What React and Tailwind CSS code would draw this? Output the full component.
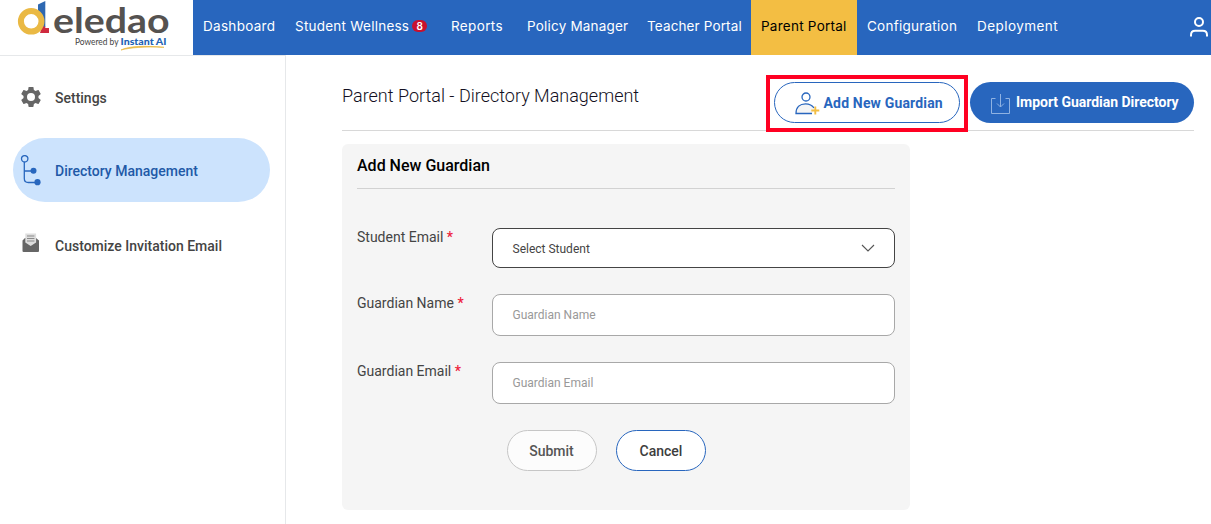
import React from "react";

const nav = [
  { label: "Dashboard", box: "w-[92px] tracking-[0.3px]" },
  { label: "Student Wellness", box: "w-[156px] tracking-[0.23px]", badge: "8" },
  { label: "Reports", box: "w-[76px] tracking-[0.37px]" },
  { label: "Policy Manager", box: "w-[120px] tracking-[0.2px]" },
  { label: "Teacher Portal", box: "w-[114px] tracking-[0.13px]" },
  { label: "Parent Portal", box: "w-[106px] bg-[#f3be43] text-black tracking-[0.25px]" },
  { label: "Configuration", box: "w-[110px] tracking-[0.25px]" },
  { label: "Deployment", box: "w-[101px] tracking-[0.45px]" },
];

function Logo() {
  return (
    <svg width="193" height="55" viewBox="0 0 193 55" className="shrink-0">
      <path d="M38 4.500 45.300 1v26H38z" fill="#2e68b1" />
      <path d="M42 26.500h3.300v1.500H49v5h-9z" fill="#cf2a3f" />
      <circle cx="31.200" cy="21.300" r="10.300" fill="#fff" stroke="#eab944" strokeWidth="6" />
      <text x="53" y="32.600" fontFamily="Lato, sans-serif" fontWeight="700" fontSize="34" fill="#555250" textLength="116.500" lengthAdjust="spacingAndGlyphs">eledao</text>
      <text x="75" y="44.500" fontFamily="Lato, sans-serif" fontSize="8.600" fill="#444" textLength="43.500" lengthAdjust="spacingAndGlyphs">Powered by</text>
      <text x="120.500" y="44.500" fontFamily="Lato, sans-serif" fontWeight="900" fontSize="9.800" fill="#2463b4" textLength="46" lengthAdjust="spacingAndGlyphs">Instant AI</text>
      <path d="M121 50C129 46 144 45.500 164 47.300 144 46.500 131 47.500 121 50z" fill="#eab944" stroke="#eab944" strokeWidth=".7" />
    </svg>
  );
}

function Gear() {
  return (
    <svg width="24" height="24" viewBox="0 0 24 24" fill="#666">
      <path d="M19.430 12.980c.04-.32.07-.64.07-.98s-.03-.66-.07-.98l2.110-1.650c.19-.15.24-.42.12-.64l-2-3.460c-.12-.22-.39-.3-.61-.22l-2.490 1c-.52-.4-1.080-.73-1.690-.98l-.38-2.650C14.460 2.180 14.250 2 14 2h-4c-.25 0-.46.18-.49.42l-.38 2.650c-.61.25-1.170.59-1.690.98l-2.490-1c-.23-.09-.49 0-.61.22l-2 3.460c-.13.22-.07.49.12.64l2.110 1.650c-.04.32-.07.65-.07.98s.03.66.07.98l-2.110 1.650c-.19.15-.24.42-.12.64l2 3.460c.12.22.39.3.61.22l2.490-1c.52.4 1.080.73 1.690.98l.38 2.650c.03.24.24.42.49.42h4c.25 0 .46-.18.49-.42l.38-2.650c.61-.25 1.170-.59 1.690-.98l2.490 1c.23.09.49 0 .61-.22l2-3.460c.12-.22.07-.49-.12-.64zM12 16a4 4 0 1 1 0-8 4 4 0 0 1 0 8z" />
    </svg>
  );
}

function Tree() {
  return (
    <svg width="22" height="32" viewBox="0 0 22 32" fill="none" stroke="#2867be" strokeWidth="1.300">
      <circle cx="4.700" cy="3.800" r="3.200" />
      <path d="M4.300 7v16.500q0 4 4 4H17M4.300 16H13" />
      <circle cx="13.500" cy="15.700" r="3" fill="#2867be" stroke="none" />
      <circle cx="17.500" cy="27.200" r="3.100" fill="#2867be" stroke="none" />
    </svg>
  );
}

function Mail() {
  return (
    <svg width="20" height="20" viewBox="0 0 20 20">
      <path d="M1.500 7.500 4 5h11l3 2.500V18q0 1-1 1H2.500q-1 0-1-1z" fill="#666" />
      <path d="M4.300.5h10.800V9.500L9.700 13 4.300 9.500z" fill="#dedede" />
      <path d="M6 3h7.400M6 5.500h7.400M6 8h7.400" stroke="#8a8a8a" strokeWidth="1" />
    </svg>
  );
}

const Required = () => <span className="text-[#ee1c3c] font-medium">*</span>;

export default function App() {
  return (
    <div className="flex h-[524px] w-[1211px] flex-col overflow-hidden bg-white font-['Roboto',sans-serif] text-[#444]">
      <header className="flex h-[55px] shrink-0">
        <Logo />
        <nav className="flex flex-1 bg-[#2866be] font-['Inter',sans-serif] text-[13.5px] font-normal text-white">
          {nav.map((n) => (
            <div key={n.label} className={`flex shrink-0 items-center whitespace-nowrap pb-[3px] pl-[10px] ${n.box}`}>
              <span>{n.label}</span>
              {n.badge && (
                <span className="ml-[3px] flex h-3 w-[15px] items-center justify-center rounded-full bg-[#c8102e] text-[10px] font-semibold tracking-normal">
                  {n.badge}
                </span>
              )}
            </div>
          ))}
          <svg className="ml-auto mt-4 shrink-0" width="22" height="22" viewBox="0 0 22 22" fill="none" stroke="#fff" strokeWidth="2">
            <circle cx="10" cy="6" r="4" />
            <path d="M2 20.500V19q0-4.200 4.200-4.200h7.600Q18 14.800 18 19v1.500" />
          </svg>
        </nav>
      </header>

      <div className="flex flex-1">
        <aside className="flex w-[286px] shrink-0 flex-col border-r border-t border-[#e6e8ea] pl-[13px] text-sm font-medium">
          <div className="mt-[10px] flex h-16 items-center">
            <span className="flex w-[42px] pb-[2px] pl-[6px]"><Gear /></span>
            <span>Settings</span>
          </div>
          <div className="mt-2 flex h-16 w-[257px] items-center rounded-[32px] bg-[#cce3fd] text-[#2159a7]">
            <span className="flex w-[42px] pl-[7px] pt-[2px]"><Tree /></span>
            <span className="pt-[2px]">Directory Management</span>
          </div>
          <div className="mt-[10px] flex h-16 items-center">
            <span className="flex w-[42px] pb-[2px] pl-2"><Mail /></span>
            <span className="pt-[4px]">Customize Invitation Email</span>
          </div>
        </aside>

        <main className="flex-1 pl-14 pr-[17px]">
          <div className="flex h-[76px] justify-between border-b border-[#d8d8d8]">
            <h1 className="pt-[28px] text-[18px] font-light leading-[26px] text-[#120f22]">Parent Portal - Directory Management</h1>
            <div className="flex pt-5">
              <div className="flex h-[57px] w-[202px] justify-center border-4 border-[#ff0022] pt-[3px]">
                <button className="flex h-[41px] w-[186px] items-center whitespace-nowrap rounded-full border border-[#2866be] bg-white pl-5 text-sm font-bold tracking-[0.17px] text-[#2866be]">
                  <svg className="mr-[3.5px] mt-[3px] shrink-0" width="25" height="24" viewBox="0 0 25 24" fill="none" stroke="#2866be" strokeWidth="1.300">
                    <circle cx="11" cy="5" r="4" />
                    <path d="M17 21.500H1C1 15 5 11.800 10.500 11.800c4.500 0 7 1.800 8.500 4.200" fill="#f5f5f5" />
                    <path d="M20.300 14.500v8M16.300 18.500h8" stroke="#f3be43" strokeWidth="1.900" />
                  </svg>
                  Add New Guardian
                </button>
              </div>
              <button className="ml-[2px] mt-[7px] flex h-[41px] w-[224px] items-center whitespace-nowrap rounded-full bg-[#2866be] pb-px pl-5 text-sm font-bold tracking-[-0.03px] text-white">
                <svg className="mr-[5px] mt-1 shrink-0" width="21" height="22" viewBox="0 0 21 22" fill="none" stroke="#8fb2e2">
                  <path d="M5.500 5.500h-4v15h18v-15h-4M10.500 1v13M7 10.500l3.500 3.500 3.500-3.500" />
                </svg>
                Import Guardian Directory
              </button>
            </div>
          </div>

          <section className="mt-[13px] h-[366px] w-[568px] rounded-md bg-[#f5f5f5] px-[15px]">
            <h2 className="h-[45px] border-b border-[#d2d2d2] pt-[10px] text-base font-medium leading-6 text-black">Add New Guardian</h2>
            <div className="mt-[39px] flex">
              <label className="w-[135px] text-sm leading-[18px]">Student Email <Required /></label>
              <div className="flex h-10 w-[403px] items-center justify-between rounded-lg border border-[#444] bg-white pl-[19.5px] pr-[19px] pt-px text-xs">
                Select Student
                <svg className="-mt-px" width="14" height="8" viewBox="0 0 14 8" fill="none" stroke="#555" strokeWidth="1.100"><path d="M1 1l6 6 6-6" /></svg>
              </div>
            </div>
            <div className="mt-[26px] flex">
              <label className="w-[135px] text-sm leading-[18px]">Guardian Name <Required /></label>
              <div className="flex h-[42px] w-[403px] items-center rounded-lg border border-[#a8a8a8] bg-white pl-[19.5px] text-xs text-[#999]">Guardian Name</div>
            </div>
            <div className="mt-[26px] flex">
              <label className="w-[135px] text-sm leading-[18px]">Guardian Email <Required /></label>
              <div className="flex h-[42px] w-[403px] items-center rounded-lg border border-[#a8a8a8] bg-white pl-[19.5px] text-xs text-[#999]">Guardian Email</div>
            </div>
            <div className="mt-[26px] flex gap-[19px] pl-[150px] text-sm font-medium">
              <button className="h-[41px] w-[90px] rounded-full border border-[#c6c6c6] bg-[#fcfcfc] pr-px text-[#555]">Submit</button>
              <button className="h-[41px] w-[90px] rounded-full border border-[#2866be] bg-white text-[#3d3d3d]">Cancel</button>
            </div>
          </section>
        </main>
      </div>
    </div>
  );
}
